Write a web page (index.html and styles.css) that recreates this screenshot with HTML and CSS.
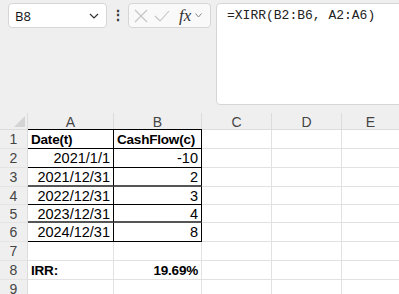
FILE: index.html
```html
<!DOCTYPE html>
<html lang="en">
<head>
    <meta charset="UTF-8">
    <meta name="viewport" content="width=device-width, initial-scale=1.0">
    <title>XIRR</title>
    <link rel="stylesheet" href="styles.css">
</head>
<body>
    <div class="app">
        <!-- name box, fx buttons and the expanded formula bar -->
        <div class="bar">
            <div class="namebox">
                <span>B8</span>
                <svg class="chev" width="10" height="6" viewBox="0 0 10 6"><path d="M1 1 L5 5 L9 1" fill="none" stroke="#333" stroke-width="1.2"/></svg>
            </div>
            <div class="dots">⋮</div>
            <div class="fxbox">
                <svg width="14" height="14" viewBox="0 0 14 14"><path d="M1 1 L13 13 M13 1 L1 13" stroke="#c4c4c4" stroke-width="1.1"/></svg>
                <svg width="16" height="12" viewBox="0 0 16 12"><path d="M1 6 L6 11 L15 1" fill="none" stroke="#c4c4c4" stroke-width="1.1"/></svg>
                <span class="fx">fx</span>
                <svg width="7" height="5" viewBox="0 0 7 5"><path d="M0.5 0.5 L3.5 4 L6.5 0.5" fill="none" stroke="#888" stroke-width="1"/></svg>
            </div>
            <div class="formula">=XIRR(B2:B6, A2:A6)</div>
        </div>

        <div class="sheet">
            <div class="corner"><span class="tri"></span></div>
            <div class="colhead">A</div>
            <div class="colhead">B</div>
            <div class="colhead">C</div>
            <div class="colhead">D</div>
            <div class="colhead last">E</div>

            <div class="rowhead">1</div>
            <div class="cell box top bold">Date(t)</div>
            <div class="cell box top bold">CashFlow(c)</div>
            <div class="cell"></div><div class="cell"></div><div class="cell last"></div>

            <div class="rowhead">2</div>
            <div class="cell box num">2021/1/1</div>
            <div class="cell box num">-10</div>
            <div class="cell"></div><div class="cell"></div><div class="cell last"></div>

            <div class="rowhead">3</div>
            <div class="cell box num thick">2021/12/31</div>
            <div class="cell box num thick">2</div>
            <div class="cell"></div><div class="cell"></div><div class="cell last"></div>

            <div class="rowhead">4</div>
            <div class="cell box num">2022/12/31</div>
            <div class="cell box num">3</div>
            <div class="cell"></div><div class="cell"></div><div class="cell last"></div>

            <div class="rowhead">5</div>
            <div class="cell box num thick">2023/12/31</div>
            <div class="cell box num thick">4</div>
            <div class="cell"></div><div class="cell"></div><div class="cell last"></div>

            <div class="rowhead">6</div>
            <div class="cell box num">2024/12/31</div>
            <div class="cell box num">8</div>
            <div class="cell"></div><div class="cell"></div><div class="cell last"></div>

            <div class="rowhead">7</div>
            <div class="cell"></div>
            <div class="cell"></div>
            <div class="cell"></div><div class="cell"></div><div class="cell last"></div>

            <div class="rowhead">8</div>
            <div class="cell bold">IRR:</div>
            <div class="cell bold num">19.69%</div>
            <div class="cell"></div><div class="cell"></div><div class="cell last"></div>

            <div class="rowhead">9</div>
            <div class="cell"></div>
            <div class="cell"></div>
            <div class="cell"></div><div class="cell"></div><div class="cell last"></div>
        </div>
    </div>
</body>
</html>
```

FILE: styles.css
```css
*{
   margin: 0;
   padding: 0;
   box-sizing: border-box;
}
body{
   background-color: #efefef;
   overflow: hidden;
}
.app{
   width: 399px;
   height: 294px;
   font-family: "Liberation Sans", Arial, sans-serif;
}
.bar{
   display: flex;
   align-items: flex-start;
   height: 113px;
   padding: 3px 0 0 8px;
}
.namebox{
   width: 99px;
   height: 25px;
   background-color: white;
   border: 1px solid #d6d6d6;
   border-radius: 4px;
   display: flex;
   align-items: center;
   justify-content: space-between;
   padding: 0 7px 0 6px;
   font-family: "Open Sans", sans-serif;
   font-size: 13px;
   color: #111;
}
.dots{
   width: 21px;
   height: 25px;
   line-height: 25px;
   text-align: center;
   font-size: 14px;
   font-weight: bold;
   color: #333;
}
.fxbox{
   width: 83px;
   height: 25px;
   background-color: #f9f9f9;
   border: 1px solid #d6d6d6;
   border-radius: 4px;
   display: flex;
   align-items: center;
   gap: 6px;
   padding-left: 5px;
}
.fx{
   font-family: "Liberation Serif", serif;
   font-style: italic;
   font-size: 17px;
   color: #333;
   margin-left: 3px;
   margin-right: -2px;
}
.formula{
   flex: 1;
   height: 102px;
   margin-left: 5px;
   margin-right: -6px;
   background-color: white;
   border: 1px solid #d6d6d6;
   border-radius: 4px;
   padding: 4px 0 0 10px;
   font-family: "Liberation Mono", monospace;
   font-size: 13px;
   color: #222;
}
.sheet{
   display: grid;
   grid-template-columns: 28px 86px 88px 70px 70px 1fr;
   grid-template-rows: 17px 19px 19px 19px 18px 18px 19px 19px 19px 19px;
   font-size: 14.5px;
   color: #000;
}
.corner{
   position: relative;
   border-right: 1px solid #dcdcdc;
   border-bottom: 1px solid #dcdcdc;
}
.tri{
   position: absolute;
   right: 2px;
   bottom: 2px;
   width: 0;
   height: 0;
   border-left: 11px solid transparent;
   border-bottom: 11px solid #d4d4d4;
}
.colhead{
   text-align: center;
   color: #444;
   font-size: 14px;
   line-height: 18px;
   border-right: 1px solid #dcdcdc;
   border-bottom: 1px solid #dcdcdc;
}
.colhead.last,.cell.last{
   border-right: none;
}
.rowhead{
   text-align: center;
   color: #444;
   font-size: 14px;
   line-height: 19px;
   border-right: 1px solid #dcdcdc;
   border-bottom: 1px solid #e4e4e4;
}
.cell{
   background-color: white;
   border-right: 1px solid #e1e1e1;
   border-bottom: 1px solid #e1e1e1;
   padding: 0 3px;
   line-height: 19px;
   white-space: nowrap;
   overflow: hidden;
}
.cell.box{
   border-right: 1px solid #000;
   border-bottom: 1px solid #000;
}
.cell.box.top{
   border-top: 1px solid #000;
   margin-top: -1px;
}
.cell.box.thick{
   border-bottom: 2px solid #555;
}
.num{
   text-align: right;
}
.bold{
   font-weight: bold;
   font-size: 13.5px;
   letter-spacing: -0.2px;
}
```
